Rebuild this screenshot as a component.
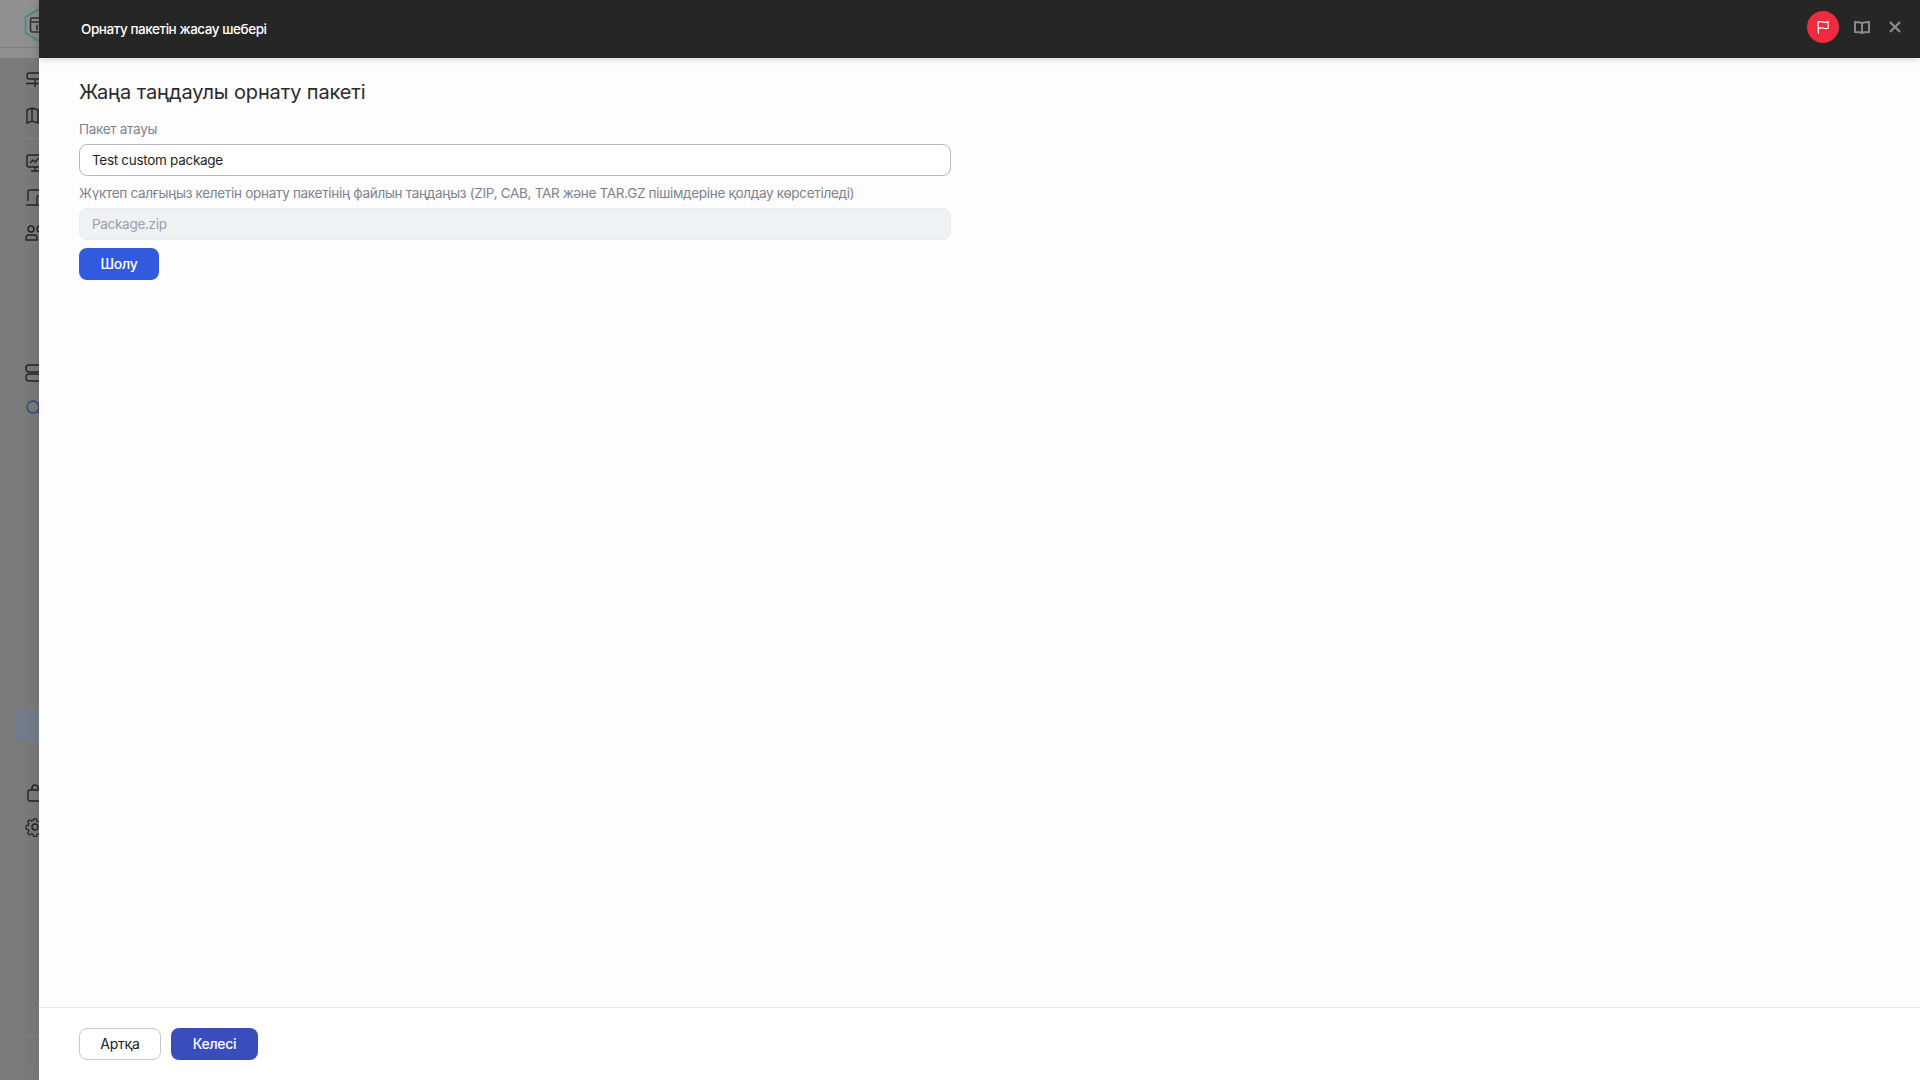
<div class="page">
  <aside class="rail">
    <div class="brand">
      <div class="brand-top">
        <svg class="logo" width="32" height="36" viewBox="0 0 32 36" fill="none">
          <path d="M15 1 1.500 9v16L15 33" stroke="#3f8f80" stroke-width="1.6" />
          <rect x="6.500" y="10" width="14" height="14" rx="1.5" stroke="#333" stroke-width="1.6" />
          <path d="M6.500 14h14M13 17v5" stroke="#333" stroke-width="1.6" />
        </svg>
      </div>
    </div>
    <nav class="nav">
      <div class="group first">
        <svg class="ico" viewBox="0 0 20 20" fill="none"><rect x="2" y="3" width="16" height="6" rx="2" /><path d="M10 9v8M1 13.500h18" /></svg>
        <svg class="ico" viewBox="0 0 20 20" fill="none"><path d="M2 5l5-2 6 2 5-2v13l-5 2-6-2-5 2zM7 3v13M13 5v13" /></svg>
      </div>
      <div class="rule"></div>
      <div class="group second">
        <svg class="ico" viewBox="0 0 20 20" fill="none"><rect x="2" y="2" width="16" height="12" rx="2" /><path d="M5 10l3-3 2 2 4-4M10 14v4M6 18h8" /></svg>
        <svg class="ico" viewBox="0 0 20 20" fill="none"><path d="M15 5V4a2 2 0 0 0-2-2H5a2 2 0 0 0-2 2v9M1 17h11" /><rect x="12" y="8" width="7" height="9" rx="1.5" /></svg>
        <svg class="ico" viewBox="0 0 20 20" fill="none"><circle cx="6" cy="6" r="3" /><circle cx="15" cy="6" r="3" /><path d="M1 17v-2a3 3 0 0 1 3-3h5a3 3 0 0 1 3 3v2zM14 12h2a3 3 0 0 1 3 3v2h-4" /></svg>
      </div>
      <div class="group third">
        <svg class="ico" viewBox="0 0 20 20" fill="none"><rect x="1" y="2" width="18" height="7" rx="3" /><rect x="1" y="11" width="18" height="7" rx="3" /></svg>
        <svg class="ico search" viewBox="0 0 20 20" fill="none"><circle cx="8" cy="8" r="6" /><path d="M12.500 12.500 19 19" /></svg>
      </div>
      <div class="active-item"></div>
      <div class="group fourth">
        <svg class="ico" viewBox="0 0 20 20" fill="none"><path d="M4 7h12a1 1 0 0 1 1 1v8a2 2 0 0 1-2 2H5a2 2 0 0 1-2-2V8a1 1 0 0 1 1-1zM7 7V5a3 3 0 0 1 6 0v2" /></svg>
        <svg class="ico" viewBox="0 0 20 20" fill="none"><circle cx="10" cy="10" r="3" /><path d="M8.500 1.500h3l.6 2.500 1.900.8 2.200-1.300 2 2-1.300 2.200.8 1.900 2.300.6v2.800l-2.300.6-.8 1.900 1.300 2.200-2 2-2.200-1.300-1.900.8-.6 2.500h-3l-.6-2.500-1.900-.8-2.200 1.300-2-2 1.300-2.200-.8-1.900-2.300-.6V9.200l2.300-.6.8-1.900-1.300-2.200 2-2 2.200 1.300 1.900-.8z" transform="translate(1.200 .6) scale(.88)" /></svg>
      </div>
      <div class="rule bottom"></div>
    </nav>
  </aside>

  <section class="drawer">
    <header class="bar">
      <h2 class="bar-title">Орнату пакетін жасау шебері</h2>
      <div class="bar-actions">
        <span class="flag">
          <svg width="16" height="16" viewBox="0 0 16 16" fill="none"><path d="M3.500 14.500 3 3c2.500-1 4-.2 5.500.2S11.500 3.500 13 2.500l.3 6.500c-1.500.8-3 .8-4.500.3S5.500 8.800 3.300 9.700" stroke="#fff" stroke-width="1.2" stroke-linejoin="round" /></svg>
        </span>
        <svg class="book" width="16" height="13" viewBox="0 0 16 13" fill="none"><path d="M8 2.500C7 1.300 5.500 1 1 1v10c4.500 0 6 .3 7 1.200 1-.9 2.500-1.200 7-1.200V1C10.500 1 9 1.300 8 2.500zM8 2.500v9.700" /></svg>
        <svg class="close" width="14" height="14" viewBox="0 0 14 14" fill="none"><path d="M2 2l10 10M12 2 2 12" /></svg>
      </div>
    </header>

    <main class="body">
      <h1>Жаңа таңдаулы орнату пакеті</h1>
      <label class="label" for="name">Пакет атауы</label>
      <input id="name" class="field" value="Test custom package" />
      <label class="label second-label" for="file">Жүктеп салғыңыз келетін орнату пакетінің файлын таңдаңыз (ZIP, CAB, TAR және TAR.GZ пішімдеріне қолдау көрсетіледі)</label>
      <input id="file" class="field disabled" placeholder="Package.zip" disabled />
      <button class="btn browse">Шолу</button>
    </main>

    <footer class="foot">
      <button class="btn ghost">Артқа</button>
      <button class="btn next">Келесі</button>
    </footer>
  </section>
</div>

<style>
  :global(body) {
    margin: 0;
    font-family: Inter, "Noto Sans", sans-serif;
  }

  .page {
    height: 1080px;
    width: 1920px;
    overflow: hidden;
    position: relative;
    background: #7a7a7a;
  }

  .rail {
    width: 80px;
    height: 100%;
    display: flex;
    flex-direction: column;
  }

  .brand {
    height: 58px;
    flex: none;
    background: #909090;
  }

  .brand-top {
    height: 48px;
    box-sizing: border-box;
    padding: 8px 0 0 24px;
    border-bottom: 1px solid #7f7f7f;
  }

  .logo { display: block; }

  .nav {
    flex: 1;
    display: flex;
    flex-direction: column;
    padding-left: 25px;
  }

  .group {
    display: flex;
    flex-direction: column;
    gap: 15px;
  }

  .first { padding-top: 12px; }
  .second { padding-top: 14px; }
  .third { padding-top: 120px; gap: 16px; }
  .fourth { padding-top: 42px; gap: 14px; }

  .rule {
    height: 1px;
    margin: 13px 0 0 -1px;
    background: #858585;
  }

  .bottom { margin-top: 198px; }

  .ico {
    width: 20px;
    height: 20px;
    flex: none;
    stroke: #252525;
    stroke-width: 1.4;
  }

  .search { stroke: #2e448e; }

  .active-item {
    width: 40px;
    height: 32px;
    margin: 290px 0 0 -9px;
    border-radius: 8px;
    background: #747b8c;
  }

  .drawer {
    position: absolute;
    top: 0;
    right: 0;
    bottom: 0;
    left: 39px;
    display: flex;
    flex-direction: column;
    background: #fdfdfd;
    box-shadow: -4px 0 12px rgba(0, 0, 0, 0.08);
  }

  .bar {
    height: 58px;
    flex: none;
    display: flex;
    align-items: center;
    justify-content: space-between;
    padding: 0 18px 0 42px;
    background: #262626;
    box-shadow: 0 2px 6px rgba(0, 0, 0, 0.14);
  }

  .bar-title {
    margin: 0;
    font-size: 13.500px;
    font-weight: 500;
    letter-spacing: -0.45px;
    color: #fff;
  }

  .bar-actions {
    display: flex;
    align-items: center;
    margin-top: -4px;
  }

  .flag {
    width: 32px;
    height: 32px;
    border-radius: 50%;
    background: #f02b3f;
    display: flex;
    align-items: center;
    justify-content: center;
  }

  .book {
    margin-left: 15px;
    stroke: #8c8c8c;
    stroke-width: 1.9;
  }

  .close {
    margin-left: 18px;
    stroke: #8c8c8c;
    stroke-width: 2.2;
  }

  .body {
    flex: 1;
    display: flex;
    flex-direction: column;
    align-items: flex-start;
    padding: 19px 40px 0;
  }

  h1 {
    margin: 0 0 12px;
    font-size: 20px;
    line-height: 30px;
    font-weight: 400;
    letter-spacing: -0.13px;
    color: #2b2b2e;
  }

  .label {
    font-size: 13.500px;
    line-height: 20px;
    letter-spacing: -0.3px;
    color: #7d8290;
    margin-bottom: 5px;
  }

  .second-label { margin-top: 7px; }

  .field {
    width: 872px;
    height: 32px;
    box-sizing: border-box;
    padding: 0 12px;
    border: 1px solid #b5b7c6;
    border-radius: 8px;
    background: #fff;
    color: #1f1f22;
    font: 13.500px/20px Inter, "Noto Sans", sans-serif;
    letter-spacing: -0.3px;
    outline: none;
  }

  .disabled {
    background: #f0f1f3;
    border-color: #eaebee;
    margin-bottom: 8px;
  }

  .disabled::placeholder {
    color: #9a9ea9;
    opacity: 1;
  }

  .btn {
    height: 32px;
    box-sizing: border-box;
    border-radius: 8px;
    font: 500 14px/20px Inter, "Noto Sans", sans-serif;
    letter-spacing: -0.28px;
    cursor: pointer;
  }

  .browse {
    width: 80px;
    border: 0;
    background: #315ade;
    color: #fff;
  }

  .foot {
    height: 73px;
    flex: none;
    box-sizing: border-box;
    display: flex;
    align-items: flex-start;
    gap: 10px;
    padding: 20px 40px 0;
    border-top: 1px solid #e9e9ea;
    background: #fff;
  }

  .ghost {
    width: 82px;
    border: 1px solid #c8c8ca;
    background: #fff;
    color: #222;
    font-weight: 400;
  }

  .next {
    width: 87px;
    border: 0;
    background: #3a4dbd;
    color: #fff;
  }
</style>
